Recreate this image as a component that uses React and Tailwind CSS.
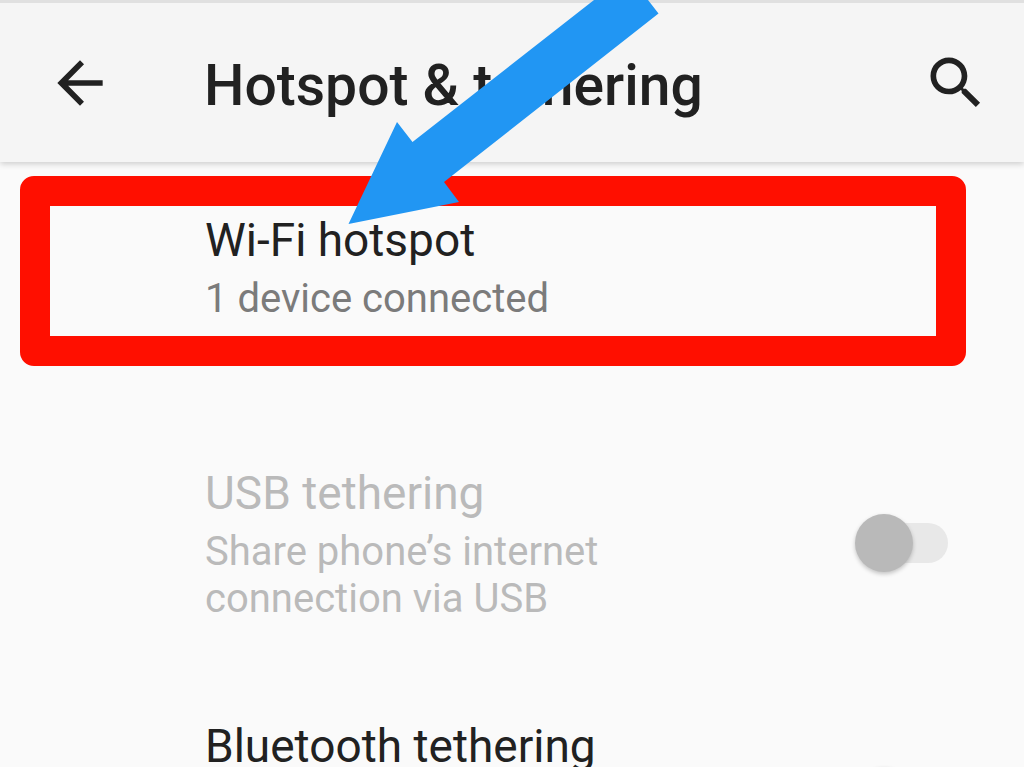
import React from "react";

function Toggle({ label, disabled }) {
  return (
    <input
      type="checkbox"
      role="switch"
      aria-label={label}
      disabled={disabled}
      className="relative h-[58px] w-[93px] shrink-0 appearance-none before:absolute before:inset-y-[9px] before:right-0 before:left-2 before:rounded-full before:bg-[#e8e8e8] after:absolute after:top-0 after:left-0 after:size-[58px] after:rounded-full after:bg-[#b9b9b9] after:shadow-[0_2px_4px_rgba(0,0,0,0.22)]"
    />
  );
}

function Row({ title, summary, muted, children }) {
  return (
    <li className="flex min-h-[253px] items-start pt-[50px] pr-[76px] pl-[205px]">
      <div className="min-w-0 flex-1">
        <h2 className={`text-[46px] leading-[53px] ${muted ? "text-[#bababa]" : "text-[#212121]"}`}>{title}</h2>
        {summary && (
          <p className={`mt-2 max-w-[440px] text-[40px] leading-[47px] ${muted ? "text-[#bababa]" : "text-[#7b7b7b]"}`}>
            {summary}
          </p>
        )}
      </div>
      {children && <div className="flex h-[152px] items-center">{children}</div>}
    </li>
  );
}

export default function App() {
  return (
    <div className="relative flex h-screen flex-col overflow-hidden bg-[#fafafa] font-['Roboto',sans-serif]">
      <header className="flex h-[162px] shrink-0 items-center border-t-[3px] border-[#e0e0e0] bg-[#f5f5f5] pr-[34px] pl-[46px] text-[#212121] shadow-[0_2px_6px_rgba(0,0,0,0.18)]">
        <button type="button" aria-label="Back" className="shrink-0">
          <svg viewBox="0 0 24 24" fill="currentColor" className="size-[68px]">
            <path d="M20 11H7.83l5.59-5.59L12 4l-8 8 8 8 1.41-1.41L7.83 13H20v-2z" />
          </svg>
        </button>
        <h1 className="ml-[90px] flex-1 pt-1.5 text-[57px] leading-[67px] font-medium whitespace-nowrap">
          Hotspot &amp; tethering
        </h1>
        <button type="button" aria-label="Search" className="shrink-0">
          <svg viewBox="0 0 24 24" fill="currentColor" className="size-[68px]">
            <path d="M15.5 14h-.79l-.28-.27C15.41 12.59 16 11.11 16 9.5 16 5.91 13.09 3 9.5 3S3 5.91 3 9.5 5.91 16 9.5 16c1.61 0 3.09-.59 4.23-1.57l.27.28v.79l5 4.99L20.49 19l-4.99-5zm-6 0C7.01 14 5 11.99 5 9.5S7.01 5 9.5 5 14 7.01 14 9.5 11.99 14 9.5 14z" />
          </svg>
        </button>
      </header>

      <main className="min-h-0 flex-1 pt-0.5">
        <ul>
          <Row title="Wi-Fi hotspot" summary="1 device connected" />
          <Row title="USB tethering" summary="Share phone’s internet connection via USB" muted>
            <Toggle label="USB tethering" disabled />
          </Row>
          <Row title="Bluetooth tethering">
            <Toggle label="Bluetooth tethering" />
          </Row>
        </ul>
      </main>

      <div className="pointer-events-none absolute top-[176px] right-[58px] left-[20px] h-[190px] rounded-[14px] border-[30px] border-[#ff0f00]" />
      <svg viewBox="0 0 320 230" className="pointer-events-none absolute top-0 left-[345px] h-[230px] w-[320px]" fill="#2196f3">
        <path d="M3.5 224 52 122 67.500 142 249 0H303L313.500 13.500 99 182 114 202Z" />
      </svg>
    </div>
  );
}
